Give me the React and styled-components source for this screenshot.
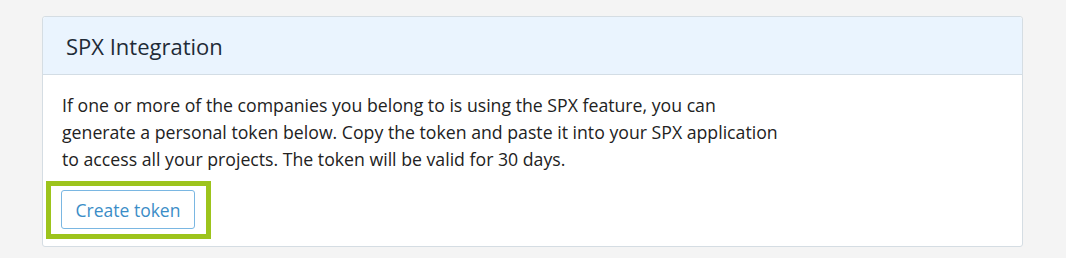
import React from 'react';
import styled, { createGlobalStyle } from 'styled-components';

const Global = createGlobalStyle`
  html, body {
    margin: 0;
    padding: 0;
    background: #f4f4f4;
    font-family: "Open Sans", "Liberation Sans", sans-serif;
  }
`;

const Page = styled.div`
  padding: 16px 43px 11px 42px;
`;

const Card = styled.section`
  background: #fff;
  border: 1px solid #d5dde3;
  border-radius: 3px;
`;

const Header = styled.header`
  height: 57px;
  display: flex;
  align-items: center;
  padding: 0 23px;
  background: #eaf4fe;
  border-bottom: 1px solid #d3dde5;
  border-radius: 3px 3px 0 0;
`;

const Title = styled.h2`
  margin: 0;
  font-size: 22px;
  font-weight: 400;
  color: #1f2b37;
`;

const Body = styled.div`
  padding: 17px 20px 7px 19px;
`;

const Text = styled.p`
  margin: 0 0 8px;
  font-size: 17.7px;
  line-height: 27px;
  color: #222;
  white-space: nowrap;
`;

const Highlight = styled.div`
  display: inline-block;
  margin-left: -16px;
  padding: 4px 11px 5px 10px;
  border: 5px solid #9dc41c;
`;

const Button = styled.button`
  height: 39px;
  width: 134px;
  padding: 0;
  background: #fff;
  border: 1px solid #7ab7e2;
  border-radius: 3px;
  font-family: inherit;
  font-size: 17.5px;
  color: #3b8dc7;
  cursor: pointer;
`;

function App() {
  return (
    <>
      <Global />
      <Page>
        <Card>
          <Header>
            <Title>SPX Integration</Title>
          </Header>
          <Body>
            <Text>
              If one or more of the companies you belong to is using the SPX feature, you can
              <br />
              generate a personal token below. Copy the token and paste it into your SPX application
              <br />
              to access all your projects. The token will be valid for 30 days.
            </Text>
            <Highlight>
              <Button>Create token</Button>
            </Highlight>
          </Body>
        </Card>
      </Page>
    </>
  );
}

export default App;
